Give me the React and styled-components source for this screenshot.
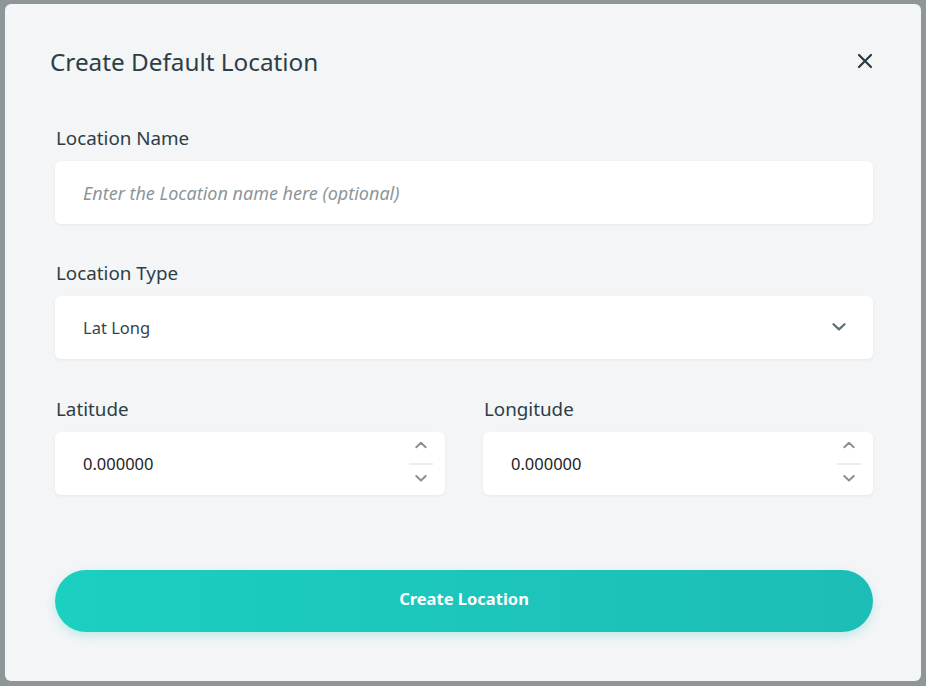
import React from "react";
import styled, { createGlobalStyle } from "styled-components";

const Global = createGlobalStyle`
  html, body { margin: 0; padding: 0; }
  body {
    background: #8f9699;
    font-family: "Noto Sans", "Open Sans", sans-serif;
    width: 926px;
    height: 686px;
    overflow: hidden;
  }
  * { box-sizing: border-box; }
`;

const Backdrop = styled.div`
  width: 926px;
  height: 686px;
  padding: 4px 5px 5px 5px;
  display: flex;
`;

const Modal = styled.div`
  flex: 1;
  background: #f3f5f7;
  border-radius: 6px;
  padding: 0 48px 0 45px;
  display: flex;
  flex-direction: column;
`;

const Header = styled.div`
  display: flex;
  align-items: center;
  justify-content: space-between;
  height: 122px;
  padding-bottom: 8px;
`;

const Title = styled.h2`
  margin: 0;
  font-size: 24.3px;
  font-weight: 400;
  color: #2d3e46;
`;

const CloseBtn = styled.button`
  border: none;
  background: none;
  padding: 0;
  width: 20px;
  height: 20px;
  display: flex;
  align-items: center;
  justify-content: center;
  color: #2a3b43;
  cursor: pointer;
  margin-right: -2px;
`;

const Body = styled.div`
  padding: 0 0 0 5px;
  display: flex;
  flex-direction: column;
`;

const Field = styled.div`
  display: flex;
  flex-direction: column;
  flex: 1;
  margin-bottom: ${(p) => p.$mb || 0}px;
`;

const Label = styled.label`
  font-size: 18.8px;
  color: #2d3e46;
  line-height: 24px;
  margin-bottom: 11px;
  padding-left: 1px;
`;

const Box = styled.div`
  height: 63px;
  background: #ffffff;
  border-radius: 6px;
  box-shadow: 0 1px 3px rgba(40, 60, 70, 0.06);
  display: flex;
  align-items: center;
  padding: 0 ${(p) => p.$pr || 12}px 0 28px;
`;

const TextInput = styled.input`
  border: none;
  outline: none;
  background: transparent;
  flex: 1;
  font-family: inherit;
  font-size: 18px;
  color: #222;
  padding: 0;
  &::placeholder {
    color: #8b969b;
    font-style: italic;
  }
`;

const SelectValue = styled.span`
  flex: 1;
  font-size: 16.5px;
  color: #34454d;
`;

const Chevron = styled.span`
  display: flex;
  color: #5f6d74;
  margin-right: 15px;
`;

const Row = styled.div`
  display: flex;
  gap: 38px;
`;

const NumberValue = styled.span`
  flex: 1;
  font-size: 16.5px;
  color: #1e1e1e;
`;

const Spinner = styled.div`
  display: flex;
  flex-direction: column;
  align-items: center;
  width: 24px;
  padding-bottom: 3px;
`;

const SpinBtn = styled.span`
  height: 16px;
  display: flex;
  align-items: center;
  justify-content: center;
  color: #879195;
  margin: ${(p) => (p.$up ? "0 0 10px 0" : "6px 0 0 0")};
`;

const SpinDivider = styled.span`
  width: 24px;
  height: 2px;
  background: #eaecee;
`;

const SubmitButton = styled.button`
  margin-top: 75px;
  height: 62px;
  padding: 0 0 5px 0;
  border: none;
  border-radius: 31px;
  background: linear-gradient(90deg, #1bcfc1 0%, #1dbdb7 100%);
  box-shadow: 0 4px 10px rgba(29, 190, 183, 0.22);
  color: #fff;
  font-family: inherit;
  font-size: 16.5px;
  font-weight: 700;
  cursor: pointer;
`;

const ChevronIcon = ({ up, size = 14, stroke = 2 }) => (
  <svg width={size} height={size * 0.6} viewBox="0 0 14 8" fill="none">
    <path
      d={up ? "M1.5 7 L7 1.8 L12.5 7" : "M1.5 1 L7 6.2 L12.5 1"}
      stroke="currentColor"
      strokeWidth={stroke}
      strokeLinecap="round"
      strokeLinejoin="round"
    />
  </svg>
);

const NumberBox = ({ value }) => (
  <Box $pr={12}>
    <NumberValue>{value}</NumberValue>
    <Spinner>
      <SpinBtn $up>
        <ChevronIcon up size={12} stroke={2.3} />
      </SpinBtn>
      <SpinDivider />
      <SpinBtn>
        <ChevronIcon size={12} stroke={2.3} />
      </SpinBtn>
    </Spinner>
  </Box>
);

export default function App() {
  return (
    <>
      <Global />
      <Backdrop>
        <Modal>
          <Header>
            <Title>Create Default Location</Title>
            <CloseBtn aria-label="Close">
              <svg width="16" height="16" viewBox="0 0 16 16">
                <path
                  d="M2 2 L14 14 M14 2 L2 14"
                  stroke="currentColor"
                  strokeWidth="2.2"
                  strokeLinecap="round"
                />
              </svg>
            </CloseBtn>
          </Header>
          <Body>
            <Field $mb={37}>
              <Label>Location Name</Label>
              <Box>
                <TextInput placeholder="Enter the Location name here (optional)" />
              </Box>
            </Field>
            <Field $mb={38}>
              <Label>Location Type</Label>
              <Box>
                <SelectValue>Lat Long</SelectValue>
                <Chevron>
                  <ChevronIcon size={14} stroke={2.2} />
                </Chevron>
              </Box>
            </Field>
            <Row>
              <Field>
                <Label>Latitude</Label>
                <NumberBox value="0.000000" />
              </Field>
              <Field>
                <Label>Longitude</Label>
                <NumberBox value="0.000000" />
              </Field>
            </Row>
            <SubmitButton>Create Location</SubmitButton>
          </Body>
        </Modal>
      </Backdrop>
    </>
  );
}
